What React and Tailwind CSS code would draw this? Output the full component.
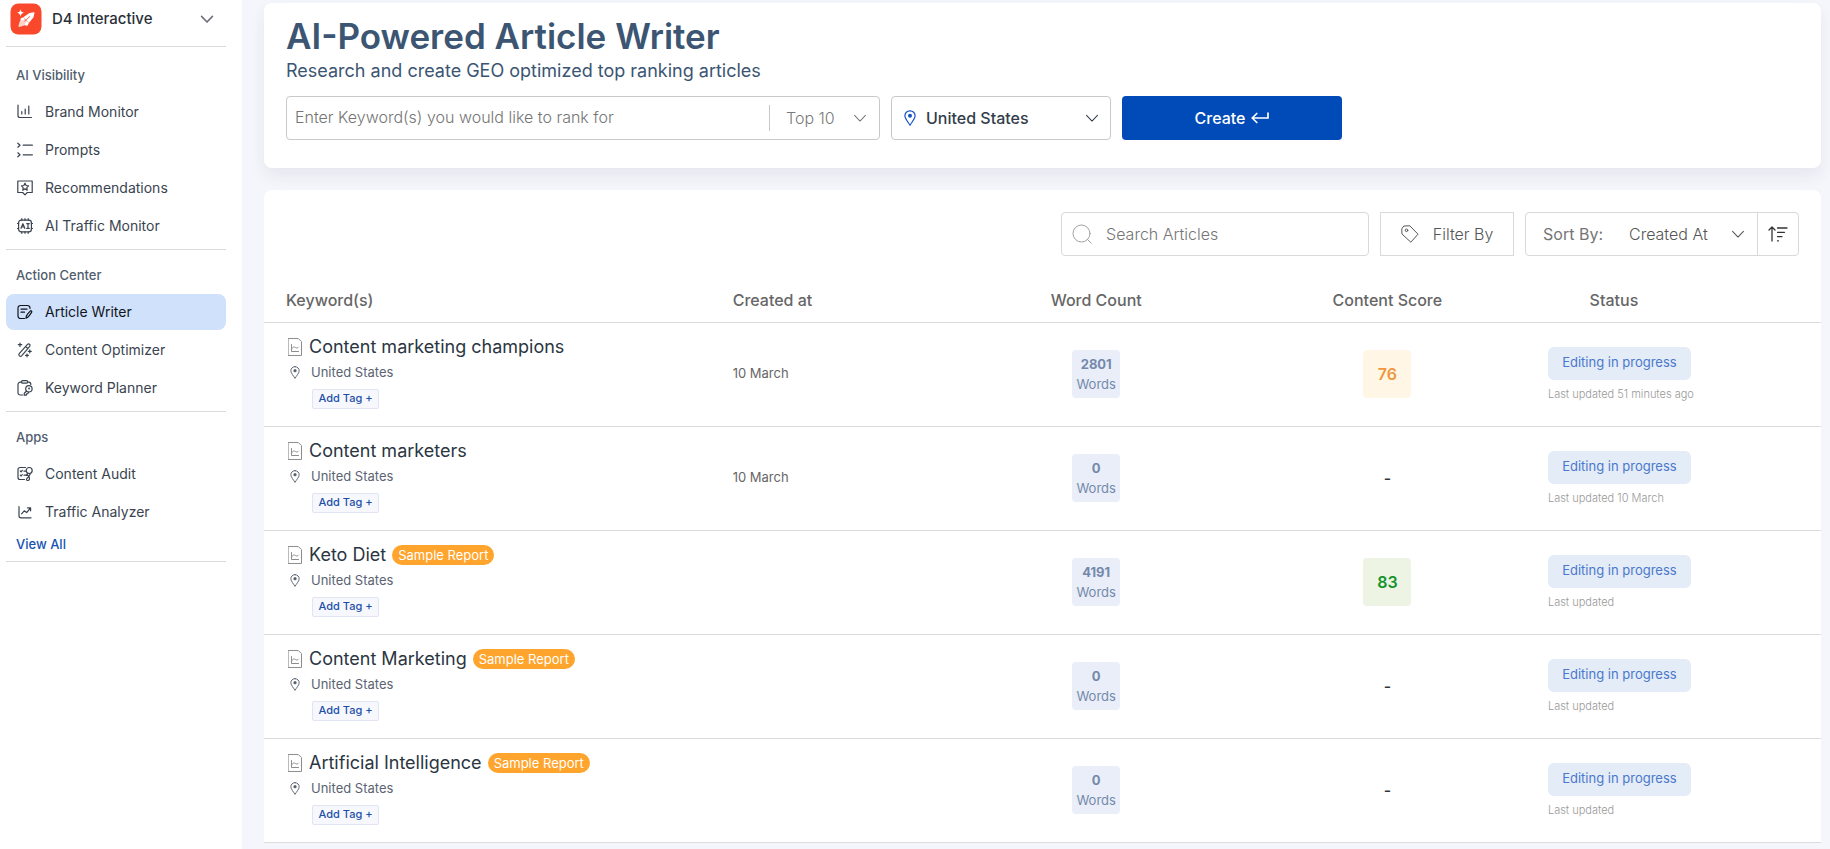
import React from "react";

const stroke = {
  fill: "none",
  stroke: "currentColor",
  strokeLinecap: "round",
  strokeLinejoin: "round",
};

function Icon({ children, className = "size-4", viewBox = "0 0 16 16", width = 1.2 }) {
  return (
    <svg aria-hidden="true" viewBox={viewBox} className={`shrink-0 ${className}`} {...stroke} strokeWidth={width}>
      {children}
    </svg>
  );
}

const BarsIcon = () => (
  <Icon>
    <path d="M1 1v10.5a2 2 0 0 0 2 2h11.5M4.8 10V7.6M8.2 10V5M11.8 10V2" />
  </Icon>
);
const PromptsIcon = () => (
  <Icon>
    <path d="M.8 1.2 3 3.2.8 5.2M.8 10.8l2.2 2-2.2 2M6.2 3.2h9.2M6.2 12.8h9.2" />
  </Icon>
);
const RecommendIcon = () => (
  <Icon>
    <path d="M.8 1h14.4v11.5h-4.9L8 14.8l-2.3-2.3H.8z" />
    <path d="m8 3.2 1.15 2.3 2.45.35-1.8 1.75.45 2.5L8 8.9l-2.25 1.2.45-2.5-1.8-1.75 2.45-.35z" />
  </Icon>
);
const AiChipIcon = () => (
  <Icon>
    <rect x="1.6" y="2.2" width="12.8" height="11.6" rx="2.6" />
    <path d="M4.8.7v1.5M8 .7v1.5M11.2.7v1.5M4.8 13.8v1.500M8 13.800v1.500M11.200 13.800v1.500M.4 5.500h1.200M.4 10.500h1.200M14.400 5.500h1.200M14.400 10.500h1.200" />
    <path d="m4 10.300 1.900-4.600 1.900 4.600M4.700 9h2.400M9.700 5.700h2.600M9.700 10.300h2.600M11 5.700v4.600" />
  </Icon>
);
const WriterIcon = () => (
  <Icon>
    <path d="M13 4.500V4a2.500 2.500 0 0 0-2.500-2.500h-7A2.500 2.500 0 0 0 1 4v8a2.500 2.500 0 0 0 2.500 2.500h4M4 5.200h6M4 8.200h3.500" />
    <path d="M9 14.300c.1-1.900.5-3 1.500-4.200l2.700-3c.8-.9 2.100.2 1.400 1.200l-2.300 3.300c-.9 1.300-1.800 2.200-3.300 2.700z" />
  </Icon>
);
const WandIcon = () => (
  <Icon>
    <path d="m2.200 11.700 8.300-9.300c1.300-1.400 3.400.4 2.200 1.900L4.600 13.800c-1.400 1.500-3.700-.5-2.400-2.100zM8.600 4.600l2.200 1.900M3 1v3.400M1.300 2.700h3.400M12.800 7.800v3M11.300 9.300h3M10 12v2.800M8.600 13.400h2.800" />
  </Icon>
);
const PlannerIcon = () => (
  <Icon>
    <path d="M4.500 2.200H3.200A2.200 2.200 0 0 0 1 4.400v8.400A2.200 2.200 0 0 0 3.200 15h2.600M11 2.200h.6a2.200 2.200 0 0 1 2.200 2.200M4.500 1.800c0-.8.4-1.200 1.200-1.200h3.800c.8 0 1.300.4 1.300 1.200s-.5 1.400-1.300 1.400H5.700c-.8 0-1.200-.6-1.200-1.400z" />
    <circle cx="11.900" cy="8.800" r="3.200" />
    <path d="m9.600 11-2.300 2.200v2h2l.2-1.400 1.300-.2.900-1.600" />
    <circle cx="12.100" cy="8.600" r=".4" />
  </Icon>
);
const AuditIcon = () => (
  <Icon>
    <path d="M8.500 1.500H3A2 2 0 0 0 1 3.500v8a2 2 0 0 0 2 2h4.500M3.300 5l.8.8 1.200-1.500M7 5.200h1.500M3.300 9.200l.8.800 1.200-1.500M7 9.200h2.500" />
    <circle cx="12.200" cy="4.500" r="3" />
    <path d="M10.800 7.300 9.300 9.500l1.700-.2.800 1.200 1.500-2.800M12 10.800c-2 .2-3.600 3.500-1.500 3.700 2 .2 2.400-1.800 1.500-3.700z" />
  </Icon>
);
const TrendIcon = () => (
  <Icon>
    <path d="M2 2.500v9.300a2 2 0 0 0 2 2h10M4.600 9.800l2.600-3 2.400 1.800L13.400 4M10.500 3.800h3.100v3" />
  </Icon>
);
const ChevronDown = ({ className = "size-4", width = 1.2 }) => (
  <Icon className={className} width={width}>
    <path d="m1.800 5 6.200 6.500L14.200 5" />
  </Icon>
);
const PinIcon = ({ className }) => (
  <svg aria-hidden="true" viewBox="0 0 12 16" className={`shrink-0 ${className}`} {...stroke} strokeWidth="1.2">
    <path d="M6 .8C3 .8.9 3 .9 5.800.9 9 4.500 12.500 6 15.200 7.500 12.500 11.100 9 11.100 5.800 11.100 3 9 .8 6 .8z" />
    <circle cx="6" cy="5.800" r="2" fill="currentColor" stroke="none" />
  </svg>
);
const DocIcon = () => (
  <svg aria-hidden="true" viewBox="0 0 14 18" className="h-[18px] w-3.5 shrink-0 text-[#8d8d8d]" {...stroke} strokeWidth="1">
    <path d="M.5.5h9.8L13.500 3.800V17.500H.500z" />
    <path d="M3.500 6.500v7h7M3.500 11c1.500-2.500 3-2.300 4-1.500s2 .8 3-.5" />
  </svg>
);

function Logo() {
  return (
    <svg aria-hidden="true" viewBox="0 0 32 32" className="size-8 shrink-0">
      <rect x=".5" y=".5" width="31" height="31" rx="8" fill="#f9482c" />
      <path d="M10.500 6.200c.5 2.300 1.200 3 3.500 3.600-2.300.6-3 1.300-3.500 3.600-.5-2.300-1.200-3-3.500-3.600 2.300-.6 3-1.300 3.500-3.600z" fill="#fff" />
      <path d="m13.300 14.200 6.200-4.200 4.300-.8c.6 0 .8.300.7.900l-1 4.200-4.600 5.600z" fill="#fff" />
      <path d="m12.400 14.800 5.900 5-2.300 2.200-6.800 2-.8-.7 1.200-4.500z" fill="#ffd3ca" />
      <path d="m10.500 15.500 2.800-1.300 1.700 2.300-4.200 1.400zM16.500 18.300l2.400 1.600-1.700 3-2.600-1.200z" fill="#fff" />
      <path d="m14.800 18 5-4.500" stroke="#f9694f" strokeWidth="1" strokeLinecap="round" />
    </svg>
  );
}

const navGroups = [
  {
    title: "AI Visibility",
    items: [
      ["Brand Monitor", BarsIcon],
      ["Prompts", PromptsIcon],
      ["Recommendations", RecommendIcon],
      ["AI Traffic Monitor", AiChipIcon],
    ],
  },
  {
    title: "Action Center",
    items: [
      ["Article Writer", WriterIcon],
      ["Content Optimizer", WandIcon],
      ["Keyword Planner", PlannerIcon],
    ],
  },
  {
    title: "Apps",
    items: [
      ["Content Audit", AuditIcon],
      ["Traffic Analyzer", TrendIcon],
    ],
    more: true,
  },
];

function Sidebar() {
  return (
    <aside className="w-[242px] shrink-0 bg-white pr-4 pl-1.5">
      <button type="button" className="flex h-[47px] w-full items-start gap-2.5 border-b border-[#d9dbde] pt-[3px] pr-3 pl-1 text-left">
        <Logo />
        <span className="flex-1 text-[15px] leading-8 font-medium text-[#2a3038]">D4 Interactive</span>
        <span className="flex h-8 items-center text-[#6b7078]">
          <ChevronDown className="size-3.5" width={1.8} />
        </span>
      </button>
      <nav className="pt-[3px]">
        {navGroups.map((group) => (
          <section key={group.title} className="border-b border-[#d9dbde] pt-[15px] pb-[5px]">
            <h2 className="mb-[9px] px-2.5 text-[13px] leading-5 font-medium text-[#4f5d6e]">{group.title}</h2>
            <ul className="flex flex-col gap-0.5">
              {group.items.map(([label, Glyph]) => {
                const active = label === "Article Writer";
                return (
                  <li key={label}>
                    <a
                      href="#"
                      aria-current={active ? "page" : undefined}
                      className={`flex h-9 items-center gap-3 rounded-lg pr-2 pl-[11px] text-sm ${active ? "bg-[#d0e1fb] text-[#10151c]" : "text-[#3a4450]"}`}
                    >
                      <Glyph />
                      {label}
                    </a>
                  </li>
                );
              })}
            </ul>
            {group.more && (
              <a href="#" className="ml-2.5 block pt-0.5 text-[13px] leading-6 font-medium text-[#1552b5]">
                View All
              </a>
            )}
          </section>
        ))}
      </nav>
    </aside>
  );
}

function ArticleForm() {
  return (
    <section className="rounded-lg bg-white px-[22px] pt-2.5 pb-7 shadow-[0_8px_16px_rgba(40,40,90,0.07)]">
      <h1 className="text-[35px] leading-[46px] font-semibold text-[#3b5573]">AI-Powered Article Writer</h1>
      <p className="mb-[13px] text-lg leading-6 text-[#3b5573]">Research and create GEO optimized top ranking articles</p>
      <form className="flex max-w-[1056px] gap-[11px]" onSubmit={(e) => e.preventDefault()}>
        <div className="flex h-11 flex-1 items-center rounded-sm border border-[#c9c9c9]">
          <input
            type="text"
            aria-label="Keywords"
            placeholder="Enter Keyword(s) you would like to rank for"
            className="h-full min-w-0 flex-1 px-2 pb-0.5 text-base font-light outline-none placeholder:text-[#757575]"
          />
          <div className="relative h-[26px] w-[110px] border-l border-[#c9c9c9] text-[#7a7a7a]">
            <select aria-label="Result depth" className="size-full appearance-none pl-4 text-base leading-6 font-light outline-none">
              <option>Top 10</option>
            </select>
            <span className="pointer-events-none absolute inset-y-0 right-3 flex items-center">
              <ChevronDown className="size-3.5" />
            </span>
          </div>
        </div>
        <div className="relative w-[220px]">
          <select aria-label="Country" className="h-11 w-full appearance-none rounded-sm border border-[#c9c9c9] pl-[34px] text-base font-medium text-[#333d49] outline-none">
            <option>United States</option>
          </select>
          <span className="pointer-events-none absolute inset-y-0 left-[13px] flex items-center text-[#1552c5]">
            <PinIcon className="h-4 w-3" />
          </span>
          <span className="pointer-events-none absolute inset-y-0 right-3 flex items-center text-[#333d49]">
            <ChevronDown className="size-3.5" />
          </span>
        </div>
        <button type="submit" className="flex h-11 w-[220px] items-center justify-center gap-1.5 rounded-sm bg-[#014bb8] text-base font-medium text-white">
          Create
          <Icon className="h-3 w-[18px]" viewBox="0 0 18 12" width={1.7}>
            <path d="M17 1v5H1.200M5.800 1.500 1.200 6l4.600 4.500" />
          </Icon>
        </button>
      </form>
    </section>
  );
}

function Toolbar() {
  return (
    <div className="flex justify-end gap-[11px] px-[22px] pt-[22px] text-base font-light text-[#555]">
      <div className="flex h-11 w-[308px] items-center gap-3 rounded-sm border border-[#d9d9d9] pl-2.5">
        <Icon className="size-5 text-[#a0a0a0]" viewBox="0 0 20 20" width={1}>
          <circle cx="9.500" cy="9.500" r="8.500" />
          <path d="m15.500 15.500 3.800 3.800" />
        </Icon>
        <input
          type="search"
          aria-label="Search articles"
          placeholder="Search Articles"
          className="h-full min-w-0 flex-1 pl-0.5 outline-none placeholder:text-[#757575]"
        />
      </div>
      <button type="button" className="flex h-11 w-[134px] items-center justify-center gap-3.5 border border-[#d9d9d9]">
        <Icon className="size-[18px]" viewBox="0 0 18 18" width={1}>
          <path d="M1 3.500 2.800 1l6-.2 8.200 8.400-7.200 8-8.600-8z" />
          <circle cx="5.500" cy="5.300" r="1.300" />
        </Icon>
        Filter By
      </button>
      <div className="flex h-11 rounded-sm border border-[#d9d9d9]">
        <label htmlFor="sort" className="flex items-center pl-[17px] font-normal text-[#757575]">
          Sort By:
        </label>
        <div className="relative w-[154px]">
          <select id="sort" className="size-full appearance-none pl-[26px] text-base font-light outline-none">
            <option>Created At</option>
          </select>
          <span className="pointer-events-none absolute inset-y-0 right-3 flex items-center">
            <ChevronDown className="size-3.5" />
          </span>
        </div>
        <button type="button" aria-label="Toggle sort direction" className="flex w-[41px] items-center justify-center border-l border-[#d9d9d9] text-[#333]">
          <Icon className="h-4 w-5" viewBox="0 0 20 16" width={1.3}>
            <path d="M4 15V1M1 4l3-3 3 3M9.500 2h9.500M9.500 6.300h7M9.500 10.600h4.500M9.500 14.800h1" />
          </Icon>
        </button>
      </div>
    </div>
  );
}

const articles = [
  { title: "Content marketing champions", created: "10 March", words: 2801, score: 76, updated: "51 minutes ago" },
  { title: "Content marketers", created: "10 March", words: 0, updated: "10 March" },
  { title: "Keto Diet", sample: true, words: 4191, score: 83, updated: "" },
  { title: "Content Marketing", sample: true, words: 0, updated: "" },
  { title: "Artificial Intelligence", sample: true, words: 0, updated: "" },
];

function Score({ value }) {
  if (value === undefined) return <span className="text-base font-medium text-[#333]">-</span>;
  const tone = value >= 80 ? "bg-[#edf4e3] text-[#14932c]" : "bg-[#fff6e5] text-[#f0963c]";
  return <span className={`mx-auto flex size-12 items-center justify-center rounded-sm text-base font-semibold ${tone}`}>{value}</span>;
}

function ArticleRow({ article }) {
  return (
    <tr className="h-[104px] border-b border-[#dcdcdc]">
      <td className="pt-3 pl-[22px] align-top">
        <div className="flex h-6 items-center gap-1.5">
          <span className="flex w-[17px] justify-center">
            <DocIcon />
          </span>
          <a href="#" className="text-lg leading-6 text-[#2b3642]">
            {article.title}
          </a>
          {article.sample && (
            <span className="h-5 rounded-full bg-[#ffa42c] px-1.5 text-[13px] leading-5 text-white">Sample Report</span>
          )}
        </div>
        <div className="mt-1 flex h-5 items-center gap-2 text-[13px] text-[#5a6472]">
          <span className="flex w-[17px] justify-center">
            <PinIcon className="h-[13px] w-2.5" />
          </span>
          United States
        </div>
        <button
          type="button"
          className="mt-1.5 ml-[26px] flex h-5 w-[67px] items-center justify-center rounded-xs border border-[#e1e5f2] bg-[#f6f8fd] text-[11px] font-medium text-[#1e4fa8]"
        >
          Add Tag +
        </button>
      </td>
      <td className="text-[13px] text-[#666]">{article.created}</td>
      <td>
        <div className="mx-auto flex size-12 flex-col items-center justify-center rounded-sm bg-[#e9eef8] text-[13px] leading-5 text-[#7489ab]">
          <strong className="font-bold">{article.words}</strong>
          <span>Words</span>
        </div>
      </td>
      <td className="text-center">
        <Score value={article.score} />
      </td>
      <td className="pl-[15px] align-top">
        <div className="mt-6 flex h-[33px] w-[143px] items-center justify-center rounded-md bg-[#e4ecf8] text-[13px] text-[#4a78cc]">
          Editing in progress
        </div>
        <p className="mt-1.5 text-[11px] leading-4 font-light text-[#999]">Last updated {article.updated}</p>
      </td>
    </tr>
  );
}

function ArticleTable() {
  return (
    <section className="mt-[22px] rounded-t-lg bg-white">
      <Toolbar />
      <table className="mt-[22px] w-full table-fixed border-collapse text-left">
        <thead>
          <tr className="h-11 border-b border-[#dcdcdc] text-base text-[#666]">
            <th className="w-[30.1%] pl-[22px] font-medium">Keyword(s)</th>
            <th className="w-[14%] font-medium">Created at</th>
            <th className="w-[18.7%] text-center font-medium">Word Count</th>
            <th className="w-[18.7%] text-center font-medium">Content Score</th>
            <th className="pl-[15px] font-medium">
              <span className="block w-[132px] text-center">Status</span>
            </th>
          </tr>
        </thead>
        <tbody>
          {articles.map((article) => (
            <ArticleRow key={article.title} article={article} />
          ))}
        </tbody>
      </table>
    </section>
  );
}

export default function App() {
  return (
    <div className="flex min-h-screen bg-[#f5f6fb] font-['Inter',sans-serif]">
      <Sidebar />
      <main className="min-w-0 flex-1 pt-[3px] pr-[9px] pl-[22px]">
        <ArticleForm />
        <ArticleTable />
      </main>
    </div>
  );
}
